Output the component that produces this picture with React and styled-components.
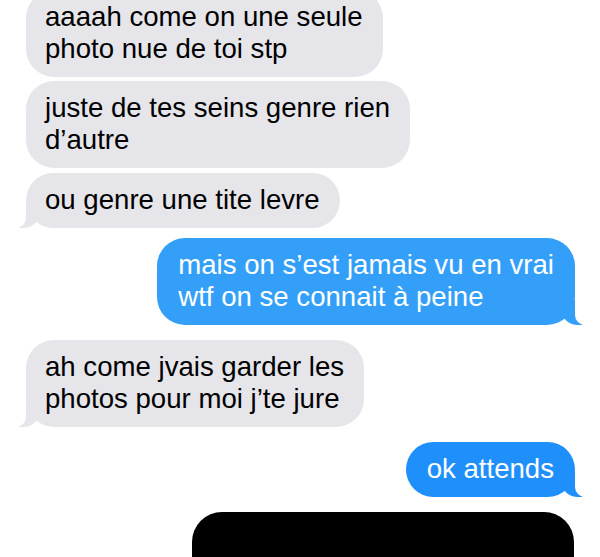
import React from 'react';
import styled, { createGlobalStyle } from 'styled-components';

const messages = [
  { from: 'them', text: 'aaaah come on une seule\nphoto nue de toi stp', gap: 0 },
  { from: 'them', text: 'juste de tes seins genre rien\nd’autre', gap: 4 },
  { from: 'them', text: 'ou genre une tite levre', gap: 5, tail: true },
  { from: 'me', text: 'mais on s’est jamais vu en vrai\nwtf on se connait à peine', gap: 10, tail: true, tone: '#349ff8' },
  { from: 'them', text: 'ah come jvais garder les\nphotos pour moi j’te jure', gap: 15, tail: true },
  { from: 'me', text: 'ok attends', gap: 15, tail: true, tone: '#1f8ffc' },
];

function App() {
  return (
    <>
      <GlobalStyle />
      <Thread>
        {messages.map((m, i) => (
          <Bubble key={i} $me={m.from === 'me'} $gap={m.gap} $tail={m.tail} $tone={m.tone}>
            {m.text}
          </Bubble>
        ))}
        <Photo />
      </Thread>
    </>
  );
}

export default App;

const GlobalStyle = createGlobalStyle`
  html, body {
    margin: 0;
    background: #ffffff;
    overflow: hidden;
  }
  body {
    font-family: "Liberation Sans", Arial, sans-serif;
  }
`;

const Thread = styled.div`
  display: flex;
  flex-direction: column;
  align-items: flex-start;
  padding: 0 25px 0 26px;
  margin-top: -10px;
  height: 567px;
  overflow: hidden;
`;

const Bubble = styled.div`
  position: relative;
  flex-shrink: 0;
  align-self: ${(p) => (p.$me ? 'flex-end' : 'flex-start')};
  margin-top: ${(p) => p.$gap}px;
  padding: 11px ${(p) => (p.$me ? '21px' : '20px')} 12px ${(p) => (p.$me ? '21px' : '19px')};
  border-radius: 28px;
  background: ${(p) => (p.$me ? p.$tone : '#e5e5ea')};
  color: ${(p) => (p.$me ? '#ffffff' : '#000000')};
  font-size: 27.6px;
  line-height: 32px;
  white-space: pre-line;

  ${(p) =>
    p.$tail &&
    `
    &::before {
      content: "";
      position: absolute;
      bottom: 0;
      height: 25px;
      width: 20px;
      background: ${p.$me ? p.$tone : '#e5e5ea'};
      ${p.$me ? 'right: -7px; border-bottom-left-radius: 16px 14px;' : 'left: -7px; border-bottom-right-radius: 16px 14px;'}
    }
    &::after {
      content: "";
      position: absolute;
      bottom: 0;
      height: 25px;
      width: 26px;
      background: #ffffff;
      ${p.$me ? 'right: -26px; border-bottom-left-radius: 10px;' : 'left: -26px; border-bottom-right-radius: 10px;'}
    }
  `}
`;

const Photo = styled.div`
  flex-shrink: 0;
  align-self: flex-end;
  margin: 15px 1px 0 0;
  width: 382px;
  height: 120px;
  background: #000000;
  border-radius: 30px;
`;
